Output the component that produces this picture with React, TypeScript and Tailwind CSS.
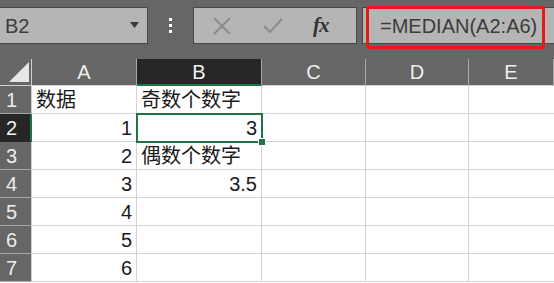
import { Fragment } from 'react';

const cols = ['A', 'B', 'C', 'D', 'E'];

// cell content per row: [A, B]
const rows: { a?: string; aNum?: boolean; b?: string; bNum?: boolean }[] = [
  { a: '数据', b: '奇数个数字' },
  { a: '1', aNum: true, b: '3', bNum: true },
  { a: '2', aNum: true, b: '偶数个数字' },
  { a: '3', aNum: true, b: '3.5', bNum: true },
  { a: '4', aNum: true },
  { a: '5', aNum: true },
  { a: '6', aNum: true },
];

const font = "font-['Liberation_Sans','Noto_Sans_CJK_SC',sans-serif]";

function FormulaBar() {
  return (
    <div className="h-[59px] bg-[#666666] flex items-start pt-[7px] relative">
      {/* Name box */}
      <div className="w-[149px] h-[37px] ml-[-1px] bg-[#b5b5b5] border border-[#474747] flex items-center justify-between pl-[5px] pr-[8px]">
        <span className={`text-[20px] text-[#3c3c3c] ${font}`}>B2</span>
        <svg width="9" height="6" viewBox="0 0 9 6" className="mt-[-2px]">
          <path d="M0 0H9L4.5 6Z" fill="#3a3a3a" />
        </svg>
      </div>
      {/* dots */}
      <div className="w-[45px] h-[37px] flex flex-col items-center justify-center gap-[3px]">
        <div className="w-[3px] h-[3px] bg-white" />
        <div className="w-[3px] h-[3px] bg-white" />
        <div className="w-[3px] h-[3px] bg-white" />
      </div>
      {/* cancel / enter / fx */}
      <div className="w-[164px] h-[37px] bg-[#b5b5b5] border border-[#474747] flex items-center">
        <svg width="20" height="18" viewBox="0 0 20 18" className="ml-[18px]">
          <path d="M2 1L18 17M18 1L2 17" stroke="#8c8c8c" strokeWidth="2" />
        </svg>
        <svg width="20" height="16" viewBox="0 0 20 16" className="ml-[31px]">
          <path d="M1 8L7 14L19 1" stroke="#8c8c8c" strokeWidth="2.2" fill="none" />
        </svg>
        <span className="ml-[30px] text-[21px] italic font-bold text-[#333] font-['Liberation_Serif',serif] tracking-[-1px]">
          fx
        </span>
      </div>
      {/* formula input */}
      <div className="flex-1 h-[37px] ml-[5px] mr-[-2px] bg-[#b5b5b5] border border-[#474747] flex items-center pl-[17px]">
        <span className={`text-[20px] text-[#3c3c3c] ${font}`}>=MEDIAN(A2:A6)</span>
      </div>
      {/* red highlight */}
      <div className="absolute left-[366px] top-[6px] w-[179px] h-[43px] border-[3px] border-[#e41b17] rounded-[3px]" />
    </div>
  );
}

function Sheet() {
  return (
    <div className={`grid grid-cols-[32px_105px_125px_104px_103px_1fr] grid-rows-[27px_repeat(7,28px)] ${font} text-[20px] relative`}>
      {/* corner */}
      <div className="bg-[#666666] border-r border-b border-[#cfcfcf] flex items-end justify-end pr-[2px] pb-[3px]">
        <svg width="20" height="20" viewBox="0 0 20 20">
          <path d="M20 0V20H0Z" fill="#e6e6e6" />
        </svg>
      </div>
      {cols.map((c) => (
        <div
          key={c}
          className={`flex items-center justify-center leading-none border-r border-[#a8a8a8] ${
            c === 'B'
              ? 'bg-[#262626] text-[#f0f0f0] border-b-2 border-b-[#217346]'
              : 'bg-[#666666] text-[#eeeeee] border-b border-b-[#cfcfcf]'
          }`}
        >
          {c}
        </div>
      ))}
      {rows.map((r, i) => {
        const n = i + 1;
        const selected = n === 2;
        return (
          <Fragment key={n}>
            <div
              className={`flex items-center pl-[6px] border-b leading-none ${
                selected
                  ? 'bg-[#262626] text-[#f0f0f0] border-r-2 border-r-[#217346] border-b-[#262626]'
                  : 'bg-[#666666] text-[#eeeeee] border-r border-r-[#cfcfcf] border-b-[#a8a8a8]'
              }`}
            >
              {n}
            </div>
            <div
              className={`bg-white border-r border-b border-[#d4d4d4] flex items-end pb-[1px] px-[4px] leading-[24px] text-[#1a1a1a] ${
                r.aNum ? 'justify-end' : 'justify-start'
              }`}
            >
              {r.a}
            </div>
            <div
              className={`bg-white border-r border-b border-[#d4d4d4] flex items-end pb-[1px] px-[4px] leading-[24px] text-[#1a1a1a] whitespace-nowrap ${
                r.bNum ? 'justify-end' : 'justify-start'
              }`}
            >
              {r.b}
            </div>
            <div className="bg-white border-r border-b border-[#d4d4d4]" />
            <div className="bg-white border-r border-b border-[#d4d4d4]" />
            <div className="bg-white border-b border-[#d4d4d4]" />
          </Fragment>
        );
      })}
      {/* selection on B2 */}
      <div className="absolute left-[136px] top-[54px] w-[127px] h-[30px] border-2 border-[#217346] pointer-events-none" />
      <div className="absolute left-[258px] top-[79px] w-[8px] h-[8px] bg-[#217346] border border-white" />
    </div>
  );
}

export default function App() {
  return (
    <div className="w-[554px] h-[283px] overflow-hidden bg-white">
      <FormulaBar />
      <Sheet />
    </div>
  );
}
